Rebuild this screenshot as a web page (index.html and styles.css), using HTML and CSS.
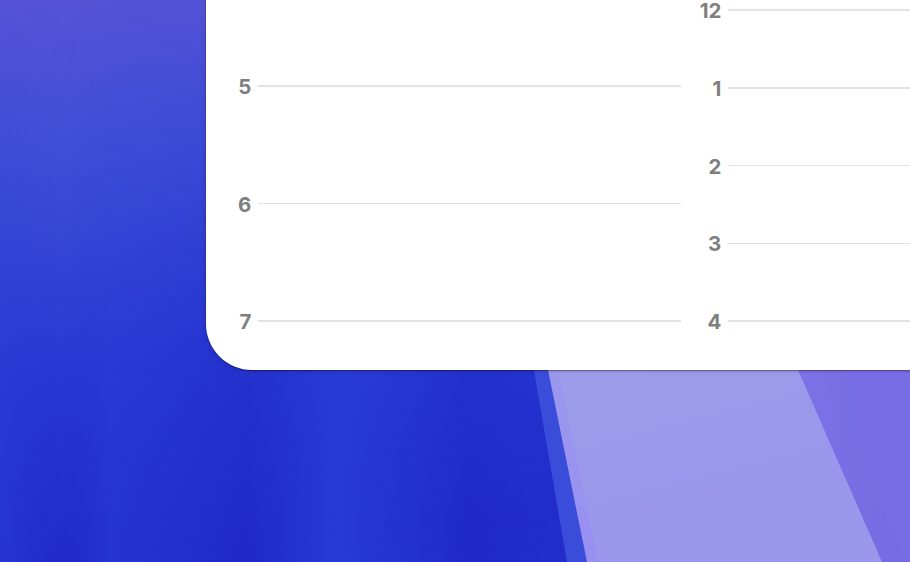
FILE: index.html
```html
<!DOCTYPE html>
<html lang="en">
<head>
<meta charset="utf-8">
<title>Calendar widget</title>
<link rel="stylesheet" href="styles.css">
</head>
<body>
<div class="desktop">
  <svg class="wallpaper" viewBox="0 0 910 562" preserveAspectRatio="none" aria-hidden="true">
    <defs>
      <linearGradient id="base" x1="0" y1="0" x2="0.2" y2="1">
        <stop offset="0" stop-color="#5654d6"/>
        <stop offset="0.3" stop-color="#3e4ed8"/>
        <stop offset="0.65" stop-color="#2838d2"/>
        <stop offset="1" stop-color="#2129c8"/>
      </linearGradient>
      <linearGradient id="streaks" gradientUnits="userSpaceOnUse" x1="0" y1="0" x2="600" y2="0">
        <stop offset="0" stop-color="#2a3ed6" stop-opacity="0.6"/>
        <stop offset="0.11" stop-color="#2430cc" stop-opacity="0"/>
        <stop offset="0.18" stop-color="#2a3ed6" stop-opacity="0.5"/>
        <stop offset="0.41" stop-color="#2029c8" stop-opacity="0.6"/>
        <stop offset="0.56" stop-color="#2a44d8" stop-opacity="0.7"/>
        <stop offset="0.62" stop-color="#2a44d8" stop-opacity="0.5"/>
        <stop offset="0.78" stop-color="#2029c8" stop-opacity="0.6"/>
        <stop offset="1" stop-color="#2636d2" stop-opacity="0.4"/>
      </linearGradient>
      <linearGradient id="fade" x1="0" y1="0" x2="0" y2="1">
        <stop offset="0" stop-color="#fff" stop-opacity="0"/>
        <stop offset="0.45" stop-color="#fff" stop-opacity="0.4"/>
        <stop offset="1" stop-color="#fff" stop-opacity="1"/>
      </linearGradient>
      <mask id="fademask">
        <rect x="0" y="0" width="910" height="562" fill="url(#fade)"/>
      </mask>
      <linearGradient id="band" x1="0" y1="0" x2="0.2" y2="1">
        <stop offset="0" stop-color="#a2a8e0"/>
        <stop offset="1" stop-color="#988ff2"/>
      </linearGradient>
      <linearGradient id="right" x1="0" y1="0" x2="1" y2="0">
        <stop offset="0" stop-color="#857ced"/>
        <stop offset="1" stop-color="#766ae2"/>
      </linearGradient>
    </defs>
    <rect x="0" y="0" width="910" height="562" fill="url(#base)"/>
    <rect x="0" y="0" width="600" height="562" fill="url(#streaks)" mask="url(#fademask)"/>
    <polygon points="456,0 910,0 910,562 567,562 470,0" fill="#3a4cda"/>
    <polygon points="473,0 910,0 910,562 587,562" fill="url(#band)"/>
    <polygon points="480,0 910,0 910,562 598,562" fill="#9da6e4" opacity="0.35"/>
    <polygon points="636,0 910,0 910,562 882,562" fill="url(#right)"/>
    <polygon points="660,0 910,0 910,562 905,562" fill="#7a6fe6" opacity="0.5"/>
  </svg>

  <section class="widget">
    <div class="column column-left">
      <div class="hour"><span class="label">5</span><span class="rule"></span></div>
      <div class="hour"><span class="label">6</span><span class="rule"></span></div>
      <div class="hour"><span class="label">7</span><span class="rule"></span></div>
    </div>
    <div class="column column-right">
      <div class="hour"><span class="label">12</span><span class="rule"></span></div>
      <div class="hour"><span class="label">1</span><span class="rule"></span></div>
      <div class="hour"><span class="label">2</span><span class="rule"></span></div>
      <div class="hour"><span class="label">3</span><span class="rule"></span></div>
      <div class="hour"><span class="label">4</span><span class="rule"></span></div>
    </div>
  </section>
</div>
</body>
</html>
```

FILE: styles.css
```css
html, body {
  margin: 0;
  padding: 0;
  width: 910px;
  height: 562px;
  overflow: hidden;
  font-family: Inter, "Liberation Sans", sans-serif;
}

.desktop {
  position: relative;
  width: 910px;
  height: 562px;
  overflow: hidden;
}

.wallpaper {
  position: absolute;
  left: 0;
  top: 0;
  width: 910px;
  height: 562px;
  display: block;
}

.widget {
  position: absolute;
  left: 206px;
  top: -40px;
  right: -40px;
  height: 410px;
  background: #ffffff;
  border-radius: 0 0 0 46px;
  box-shadow: 0 1px 1.5px rgba(0, 0, 0, 0.35), 0 0 5px rgba(0, 0, 0, 0.18);
  display: flex;
  align-items: flex-end;
  gap: 10px;
  padding: 0 0 39px 15px;
  box-sizing: border-box;
}

.column {
  display: flex;
  flex-direction: column;
}

.column-left {
  width: 460px;
  gap: 97.5px;
}

.column-right {
  flex: 1;
  gap: 57.75px;
}

.hour {
  display: flex;
  align-items: center;
  height: 20px;
}

.label {
  width: 30px;
  margin-right: 7px;
  text-align: right;
  font-size: 20.5px;
  font-weight: 700;
  line-height: 20px;
  color: #7f7f7f;
  letter-spacing: -0.3px;
  position: relative;
  top: 1px;
}

.rule {
  flex: 1;
  height: 1.5px;
  background: #e3e3e3;
}
```
